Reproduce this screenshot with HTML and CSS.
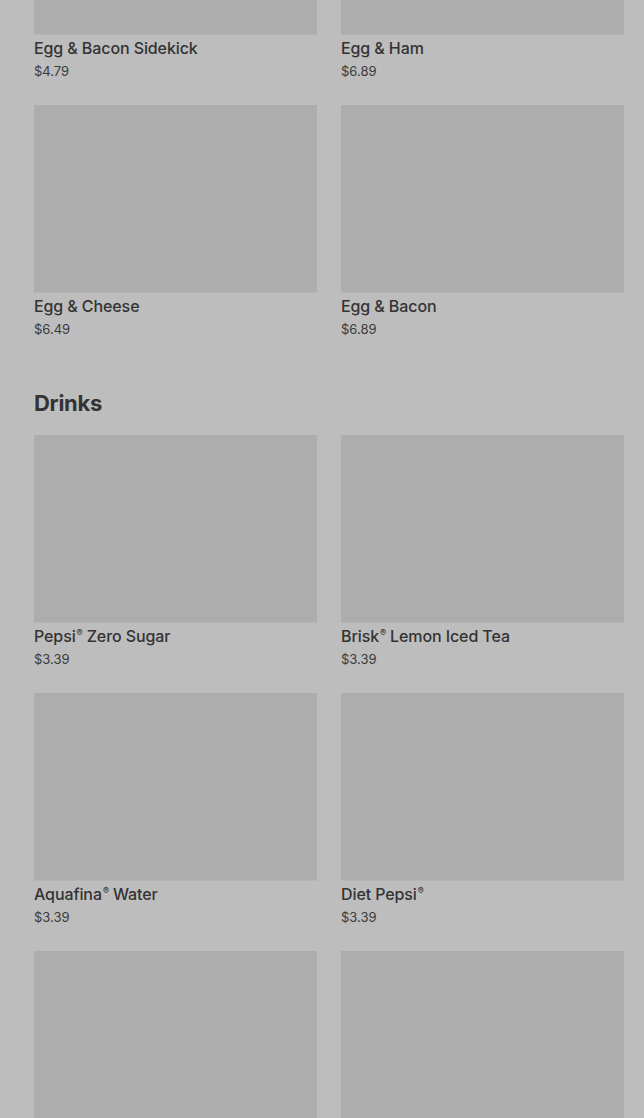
FILE: index.html
```html
<!DOCTYPE html>
<html lang="en">
<head>
    <meta charset="UTF-8">
    <meta name="viewport" content="width=device-width, initial-scale=1.0">
    <title>Menu</title>
    <link rel="stylesheet" href="styles.css">
</head>
<body>
    <main class="menu">
        <section class="menu-section scrolled">
            <div class="menu-grid">
                <div class="menu-item">
                    <div class="item-image"></div>
                    <div class="item-name">Egg &amp; Bacon Sidekick</div>
                    <div class="item-price">$4.79</div>
                </div>
                <div class="menu-item">
                    <div class="item-image"></div>
                    <div class="item-name">Egg &amp; Ham</div>
                    <div class="item-price">$6.89</div>
                </div>
                <div class="menu-item">
                    <div class="item-image"></div>
                    <div class="item-name">Egg &amp; Cheese</div>
                    <div class="item-price">$6.49</div>
                </div>
                <div class="menu-item">
                    <div class="item-image"></div>
                    <div class="item-name">Egg &amp; Bacon</div>
                    <div class="item-price">$6.89</div>
                </div>
            </div>
        </section>

        <section class="menu-section">
            <h2 class="section-title">Drinks</h2>
            <div class="menu-grid">
                <div class="menu-item">
                    <div class="item-image"></div>
                    <div class="item-name">Pepsi<sup>®</sup> Zero Sugar</div>
                    <div class="item-price">$3.39</div>
                </div>
                <div class="menu-item">
                    <div class="item-image"></div>
                    <div class="item-name">Brisk<sup>®</sup> Lemon Iced Tea</div>
                    <div class="item-price">$3.39</div>
                </div>
                <div class="menu-item">
                    <div class="item-image"></div>
                    <div class="item-name">Aquafina<sup>®</sup> Water</div>
                    <div class="item-price">$3.39</div>
                </div>
                <div class="menu-item">
                    <div class="item-image"></div>
                    <div class="item-name">Diet Pepsi<sup>®</sup></div>
                    <div class="item-price">$3.39</div>
                </div>
                <div class="menu-item">
                    <div class="item-image"></div>
                </div>
                <div class="menu-item">
                    <div class="item-image"></div>
                </div>
            </div>
        </section>
    </main>
</body>
</html>
```

FILE: styles.css
```css
body {
    margin: 0;
    background: #bdbdbd;
    font-family: Inter, "Noto Sans", sans-serif;
    color: #333333;
    overflow: hidden;
}

.menu {
    padding: 0 20px 0 34px;
}

/* page is scrolled: first row of images is cut off at the top */
.scrolled {
    margin-top: -153px;
}

.menu-section {
    margin-bottom: 49px;
}

.section-title {
    margin: 0 0 17px;
    font-size: 22px;
    line-height: 30px;
    font-weight: 700;
    letter-spacing: -0.3px;
    color: #333333;
}

.menu-grid {
    display: grid;
    grid-template-columns: 1fr 1fr;
    column-gap: 24px;
    row-gap: 24px;
}

.item-image {
    height: 187px;
    background: #adadad;
    border-bottom: 1px solid #b4b4b4;
}

.item-name {
    margin-top: 2px;
    font-size: 16px;
    line-height: 22px;
    font-weight: 500;
    letter-spacing: -0.1px;
}

.item-name sup {
    font-size: 9px;
    line-height: 0;
    vertical-align: 6px;
    margin-left: 1px;
}

.item-price {
    margin-top: 2px;
    font-size: 13px;
    line-height: 20px;
    color: #3a3a3a;
}
```
